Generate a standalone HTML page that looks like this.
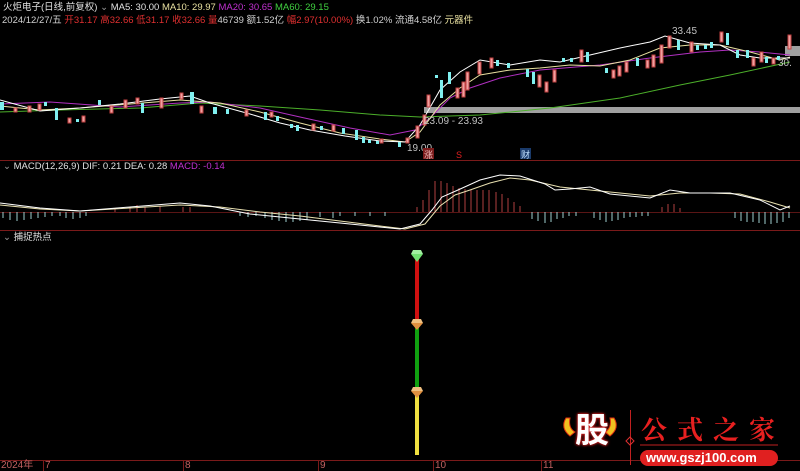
<!DOCTYPE html>
<html><head><meta charset="utf-8"><style>
html,body{margin:0;padding:0;background:#000;width:800px;height:471px;overflow:hidden}
.t{position:absolute;font-family:"Liberation Sans","Noto Sans CJK SC",sans-serif;font-size:9.5px;white-space:nowrap;line-height:13px}
</style></head><body>
<div style="position:relative;width:800px;height:471px">
<svg width="800" height="471" style="position:absolute;left:0;top:0">
<line x1="0" y1="160.5" x2="800" y2="160.5" stroke="#7a1a1a"/>
<line x1="0" y1="230.5" x2="800" y2="230.5" stroke="#7a1a1a"/>
<line x1="0" y1="460.5" x2="800" y2="460.5" stroke="#7a1a1a"/>
<line x1="0" y1="212.5" x2="800" y2="212.5" stroke="#5a1515" stroke-width="1"/>
<rect x="424" y="107" width="376" height="6" fill="#a0a0a0"/>
<rect x="785" y="46" width="15" height="10" fill="#a0a0a0"/>
<polyline fill="none" stroke="#4caf2a" stroke-width="1" points="0,112 60,110 140,108 200,103 260,106 320,110 380,115 420,117 480,115 550,108 620,98 680,85 730,75 790,62"/>
<polyline fill="none" stroke="#b030c0" stroke-width="1" points="0,104 50,102 120,107 180,103 210,102 260,108 300,117 350,128 390,135 415,130 430,118 450,98 470,88 500,78 540,70 600,65 650,58 700,52 730,50 760,52 790,55"/>
<polyline fill="none" stroke="#e8e0a0" stroke-width="1" points="0,106 40,110 80,108 130,104 180,100 220,103 260,112 300,123 340,133 380,139 405,142 420,132 440,105 460,88 480,75 510,70 540,68 570,65 600,66 630,60 660,48 690,45 720,45 750,52 780,60 790,57"/>
<polyline fill="none" stroke="#ffffff" stroke-width="1" points="0,100 40,111 80,108 120,104 160,99 190,96 210,103 250,114 280,123 310,130 345,136 380,141 405,142 420,125 440,90 460,72 480,60 510,65 540,60 560,62 590,55 620,48 650,42 665,36 690,43 720,45 740,55 760,58 790,58"/>
<g fill="#f0a0a0" stroke="#c04040">
<rect x="14" y="108" width="3" height="4"/><rect x="28" y="106" width="3" height="6"/><rect x="38" y="104" width="3" height="6"/><rect x="68" y="118" width="3" height="5"/><rect x="82" y="116" width="3" height="6"/><rect x="110" y="106" width="3" height="7"/><rect x="124" y="100" width="3" height="8"/><rect x="136" y="98" width="3" height="6"/><rect x="160" y="98" width="3" height="10"/><rect x="180" y="93" width="3" height="6"/><rect x="200" y="106" width="3" height="7"/><rect x="245" y="110" width="3" height="6"/><rect x="270" y="112" width="3" height="5"/><rect x="312" y="124" width="3" height="6"/><rect x="332" y="125" width="3" height="6"/><rect x="380" y="139" width="3" height="4"/><rect x="406" y="138" width="3" height="5"/><rect x="416" y="126" width="3" height="12"/><rect x="423" y="115" width="3" height="10"/><rect x="427" y="95" width="3" height="12"/><rect x="456" y="88" width="3" height="10"/><rect x="462" y="82" width="3" height="15"/><rect x="466" y="72" width="3" height="18"/><rect x="478" y="62" width="3" height="12"/><rect x="490" y="58" width="3" height="10"/><rect x="538" y="75" width="3" height="12"/><rect x="545" y="82" width="3" height="10"/><rect x="553" y="70" width="3" height="12"/><rect x="580" y="50" width="3" height="12"/><rect x="612" y="70" width="3" height="8"/><rect x="618" y="66" width="3" height="10"/><rect x="625" y="62" width="3" height="10"/><rect x="646" y="60" width="3" height="8"/><rect x="652" y="55" width="3" height="12"/><rect x="660" y="45" width="3" height="18"/><rect x="668" y="36" width="3" height="12"/><rect x="690" y="42" width="3" height="10"/><rect x="720" y="32" width="3" height="10"/><rect x="752" y="58" width="3" height="8"/><rect x="760" y="52" width="3" height="10"/><rect x="772" y="58" width="3" height="6"/><rect x="788" y="35" width="3" height="14"/>
</g>
<g fill="#80f0f0">
<rect x="0" y="102" width="4" height="8"/><rect x="44" y="102" width="3" height="4"/><rect x="55" y="108" width="3" height="12"/><rect x="76" y="119" width="3" height="3"/><rect x="98" y="100" width="3" height="5"/><rect x="141" y="103" width="3" height="10"/><rect x="190" y="92" width="4" height="12"/><rect x="213" y="107" width="4" height="7"/><rect x="226" y="109" width="3" height="5"/><rect x="264" y="112" width="3" height="8"/><rect x="276" y="116" width="3" height="5"/><rect x="290" y="124" width="3" height="4"/><rect x="296" y="125" width="3" height="6"/><rect x="320" y="126" width="3" height="4"/><rect x="342" y="128" width="3" height="6"/><rect x="355" y="130" width="3" height="10"/><rect x="362" y="137" width="3" height="6"/><rect x="368" y="140" width="3" height="3"/><rect x="376" y="141" width="3" height="3"/><rect x="398" y="142" width="3" height="5"/><rect x="435" y="75" width="3" height="3"/><rect x="440" y="80" width="3" height="18"/><rect x="448" y="72" width="3" height="12"/><rect x="496" y="60" width="3" height="6"/><rect x="507" y="63" width="3" height="5"/><rect x="526" y="69" width="3" height="8"/><rect x="532" y="72" width="3" height="12"/><rect x="562" y="58" width="3" height="4"/><rect x="570" y="58" width="3" height="4"/><rect x="586" y="52" width="3" height="10"/><rect x="605" y="68" width="3" height="5"/><rect x="636" y="58" width="3" height="8"/><rect x="677" y="40" width="3" height="10"/><rect x="696" y="45" width="3" height="5"/><rect x="704" y="45" width="3" height="4"/><rect x="710" y="42" width="3" height="6"/><rect x="726" y="33" width="3" height="12"/><rect x="736" y="50" width="3" height="8"/><rect x="746" y="50" width="3" height="8"/><rect x="765" y="57" width="3" height="6"/><rect x="777" y="56" width="3" height="4"/>
</g>
<text x="424" y="124" fill="#c0c0c0" font-family="Liberation Sans" font-size="10">23.09 - 23.93</text>
<text x="407" y="151" fill="#c0c0c0" font-family="Liberation Sans" font-size="10">19.00</text>
<text x="672" y="34" fill="#c0c0c0" font-family="Liberation Sans" font-size="10">33.45</text>
<text x="778" y="66" fill="#c0c0c0" font-family="Liberation Sans" font-size="10">30.</text>
<rect x="423" y="148" width="11" height="11" fill="#7a1a1a"/>
<text x="424" y="158" fill="#f0c0c0" font-family="Noto Sans CJK SC" font-size="9">涨</text>
<text x="456" y="158" fill="#e02020" font-family="Liberation Sans" font-size="9">S</text>
<rect x="520" y="148" width="11" height="11" fill="#1a3a6a"/>
<text x="521" y="158" fill="#c0e0ff" font-family="Noto Sans CJK SC" font-size="9">财</text>
<g stroke="#b04040" stroke-width="1">
<line x1="417" y1="212" x2="417" y2="207"/><line x1="423" y1="212" x2="423" y2="200"/><line x1="429" y1="212" x2="429" y2="190"/><line x1="435" y1="212" x2="435" y2="181"/><line x1="441" y1="212" x2="441" y2="181"/><line x1="447" y1="212" x2="447" y2="183"/><line x1="453" y1="212" x2="453" y2="186"/><line x1="459" y1="212" x2="459" y2="188"/><line x1="465" y1="212" x2="465" y2="189"/><line x1="471" y1="212" x2="471" y2="190"/><line x1="477" y1="212" x2="477" y2="190"/><line x1="483" y1="212" x2="483" y2="190"/><line x1="489" y1="212" x2="489" y2="190"/><line x1="496" y1="212" x2="496" y2="192"/><line x1="502" y1="212" x2="502" y2="194"/><line x1="508" y1="212" x2="508" y2="198"/><line x1="514" y1="212" x2="514" y2="202"/><line x1="520" y1="212" x2="520" y2="206"/>
<line x1="662" y1="212" x2="662" y2="207"/><line x1="668" y1="212" x2="668" y2="204"/><line x1="674" y1="212" x2="674" y2="204"/><line x1="680" y1="212" x2="680" y2="208"/>
<line x1="115" y1="212" x2="115" y2="208"/><line x1="130" y1="212" x2="130" y2="207"/><line x1="137" y1="212" x2="137" y2="205"/><line x1="145" y1="212" x2="145" y2="207"/><line x1="160" y1="212" x2="160" y2="206"/><line x1="183" y1="212" x2="183" y2="207"/><line x1="190" y1="212" x2="190" y2="207"/>
</g>
<g stroke="#a0d0d0" stroke-width="1">
<line x1="3" y1="212" x2="3" y2="218"/><line x1="10" y1="212" x2="10" y2="220"/><line x1="17" y1="212" x2="17" y2="221"/><line x1="24" y1="212" x2="24" y2="220"/><line x1="31" y1="212" x2="31" y2="219"/><line x1="38" y1="212" x2="38" y2="218"/><line x1="45" y1="212" x2="45" y2="217"/><line x1="52" y1="212" x2="52" y2="216"/><line x1="60" y1="212" x2="60" y2="216"/><line x1="66" y1="212" x2="66" y2="218"/><line x1="73" y1="212" x2="73" y2="219"/><line x1="80" y1="212" x2="80" y2="218"/><line x1="86" y1="212" x2="86" y2="216"/>
<line x1="240" y1="212" x2="240" y2="216"/><line x1="248" y1="212" x2="248" y2="217"/><line x1="256" y1="212" x2="256" y2="216"/><line x1="265" y1="212" x2="265" y2="218"/><line x1="272" y1="212" x2="272" y2="220"/><line x1="279" y1="212" x2="279" y2="221"/><line x1="286" y1="212" x2="286" y2="222"/><line x1="293" y1="212" x2="293" y2="222"/><line x1="300" y1="212" x2="300" y2="221"/><line x1="307" y1="212" x2="307" y2="220"/><line x1="320" y1="212" x2="320" y2="217"/><line x1="333" y1="212" x2="333" y2="218"/><line x1="340" y1="212" x2="340" y2="216"/><line x1="355" y1="212" x2="355" y2="216"/><line x1="370" y1="212" x2="370" y2="216"/><line x1="385" y1="212" x2="385" y2="216"/>
<line x1="532" y1="212" x2="532" y2="219"/><line x1="538" y1="212" x2="538" y2="221"/><line x1="545" y1="212" x2="545" y2="223"/><line x1="551" y1="212" x2="551" y2="222"/><line x1="557" y1="212" x2="557" y2="219"/><line x1="563" y1="212" x2="563" y2="218"/><line x1="569" y1="212" x2="569" y2="216"/><line x1="576" y1="212" x2="576" y2="216"/><line x1="594" y1="212" x2="594" y2="218"/><line x1="600" y1="212" x2="600" y2="220"/><line x1="606" y1="212" x2="606" y2="222"/><line x1="612" y1="212" x2="612" y2="221"/><line x1="618" y1="212" x2="618" y2="220"/><line x1="624" y1="212" x2="624" y2="218"/><line x1="630" y1="212" x2="630" y2="217"/><line x1="636" y1="212" x2="636" y2="217"/><line x1="642" y1="212" x2="642" y2="216"/><line x1="648" y1="212" x2="648" y2="216"/>
<line x1="735" y1="212" x2="735" y2="218"/><line x1="741" y1="212" x2="741" y2="221"/><line x1="747" y1="212" x2="747" y2="222"/><line x1="753" y1="212" x2="753" y2="222"/><line x1="759" y1="212" x2="759" y2="223"/><line x1="765" y1="212" x2="765" y2="224"/><line x1="771" y1="212" x2="771" y2="224"/><line x1="777" y1="212" x2="777" y2="223"/><line x1="783" y1="212" x2="783" y2="222"/><line x1="789" y1="212" x2="789" y2="218"/>
</g>
<polyline fill="none" stroke="#e8e0b0" stroke-width="1" points="0,205 40,209 80,211 130,208 180,205 220,207 260,212 300,216 340,221 380,226 405,229 425,224 440,206 455,195 470,190 490,183 510,178 530,180 560,187 590,190 620,193 650,196 680,193 710,193 740,194 770,202 790,208"/>
<polyline fill="none" stroke="#ffffff" stroke-width="1" points="0,203 40,208 80,211 130,207 180,203 210,206 250,214 290,218 330,222 370,226 400,229 420,224 432,210 442,197 458,190 480,180 500,175 520,176 545,184 555,190 570,189 590,187 610,194 650,198 670,190 690,193 730,193 760,200 780,210 790,206"/>
<rect x="415" y="253" width="4" height="69" fill="#d01010"/>
<rect x="415" y="322" width="4" height="67" fill="#10a010"/>
<rect x="415" y="389" width="4" height="66" fill="#f0e040"/>
<polygon points="411,254 423,254 417,262" fill="#70e070"/><polygon points="413,250 421,250 423,254 411,254" fill="#a0f0a0"/>
<polygon points="411,323 423,323 417,330" fill="#e09040"/><polygon points="413,319 421,319 423,323 411,323" fill="#f0c080"/>
<polygon points="411,391 423,391 417,398" fill="#e09040"/><polygon points="413,387 421,387 423,391 411,391" fill="#f0c080"/>
<g stroke="#7a1a1a"><line x1="43.5" y1="460" x2="43.5" y2="471"/><line x1="183.5" y1="460" x2="183.5" y2="471"/><line x1="318.5" y1="460" x2="318.5" y2="471"/><line x1="433.5" y1="460" x2="433.5" y2="471"/><line x1="541.5" y1="460" x2="541.5" y2="471"/></g>
<line x1="630.5" y1="410" x2="630.5" y2="465" stroke="#c02020"/>
<polygon points="630,437 634,441 630,445 626,441" fill="none" stroke="#e03030"/>
<line x1="640" y1="445" x2="778" y2="445" stroke="#c02020"/>
<path d="M566,418 Q560,428 570,436 L575,432 Q568,428 570,418Z" fill="#f0c020" stroke="#e03010"/>
<path d="M614,418 Q620,428 610,436 L605,432 Q612,428 610,418Z" fill="#f0c020" stroke="#e03010"/>
<rect x="640" y="450" width="138" height="16" rx="8" fill="#e02020"/>
</svg>
<div class="t" style="left:3px;top:1px;color:#e0e0e0">火炬电子(日线,前复权) <span style="color:#999">⌄</span> MA5: 30.00 <span style="color:#e8e0a0">MA10: 29.97</span> <span style="color:#c030d0">MA20: 30.65</span> <span style="color:#40d040">MA60: 29.15</span></div>
<div class="t" style="left:2px;top:14px;color:#d0d0d0">2024/12/27/五 <span style="color:#e03030">开31.17 高32.66 低31.17 收32.66</span> <span style="color:#e03030">量</span>46739 额1.52亿 <span style="color:#e03030">幅2.97(10.00%)</span> 换1.02% 流通4.58亿 <span style="color:#e8e0a0">元器件</span></div>
<div class="t" style="left:3px;top:160px;color:#e0e0e0"><span style="color:#999">⌄</span> MACD(12,26,9) DIF: 0.21 DEA: 0.28 <span style="color:#c030d0">MACD: -0.14</span></div>
<div class="t" style="left:3px;top:231px;color:#e0e0e0"><span style="color:#999">⌄</span> 捕捉热点</div>
<div class="t" style="left:1px;top:459px;color:#c06060;font-size:10px">2024年</div>
<div class="t" style="left:45px;top:459px;color:#c06060;font-size:10px">7</div>
<div class="t" style="left:185px;top:459px;color:#c06060;font-size:10px">8</div>
<div class="t" style="left:320px;top:459px;color:#c06060;font-size:10px">9</div>
<div class="t" style="left:435px;top:459px;color:#c06060;font-size:10px">10</div>
<div class="t" style="left:543px;top:459px;color:#c06060;font-size:10px">11</div>
<div class="t" style="left:575px;top:411px;color:#fff;font-size:34px;line-height:40px;font-weight:bold;text-shadow:0 0 3px #e02020,0 0 2px #e02020">股</div>
<div class="t" style="left:641px;top:414px;color:#e82020;font-size:26px;line-height:30px;letter-spacing:10px;font-family:'Noto Serif CJK SC',serif;font-weight:bold">公式之家</div>
<div class="t" style="left:646px;top:451px;color:#fff;font-size:13px;font-weight:bold">www.gszj100.com</div>
</div>
</body></html>
